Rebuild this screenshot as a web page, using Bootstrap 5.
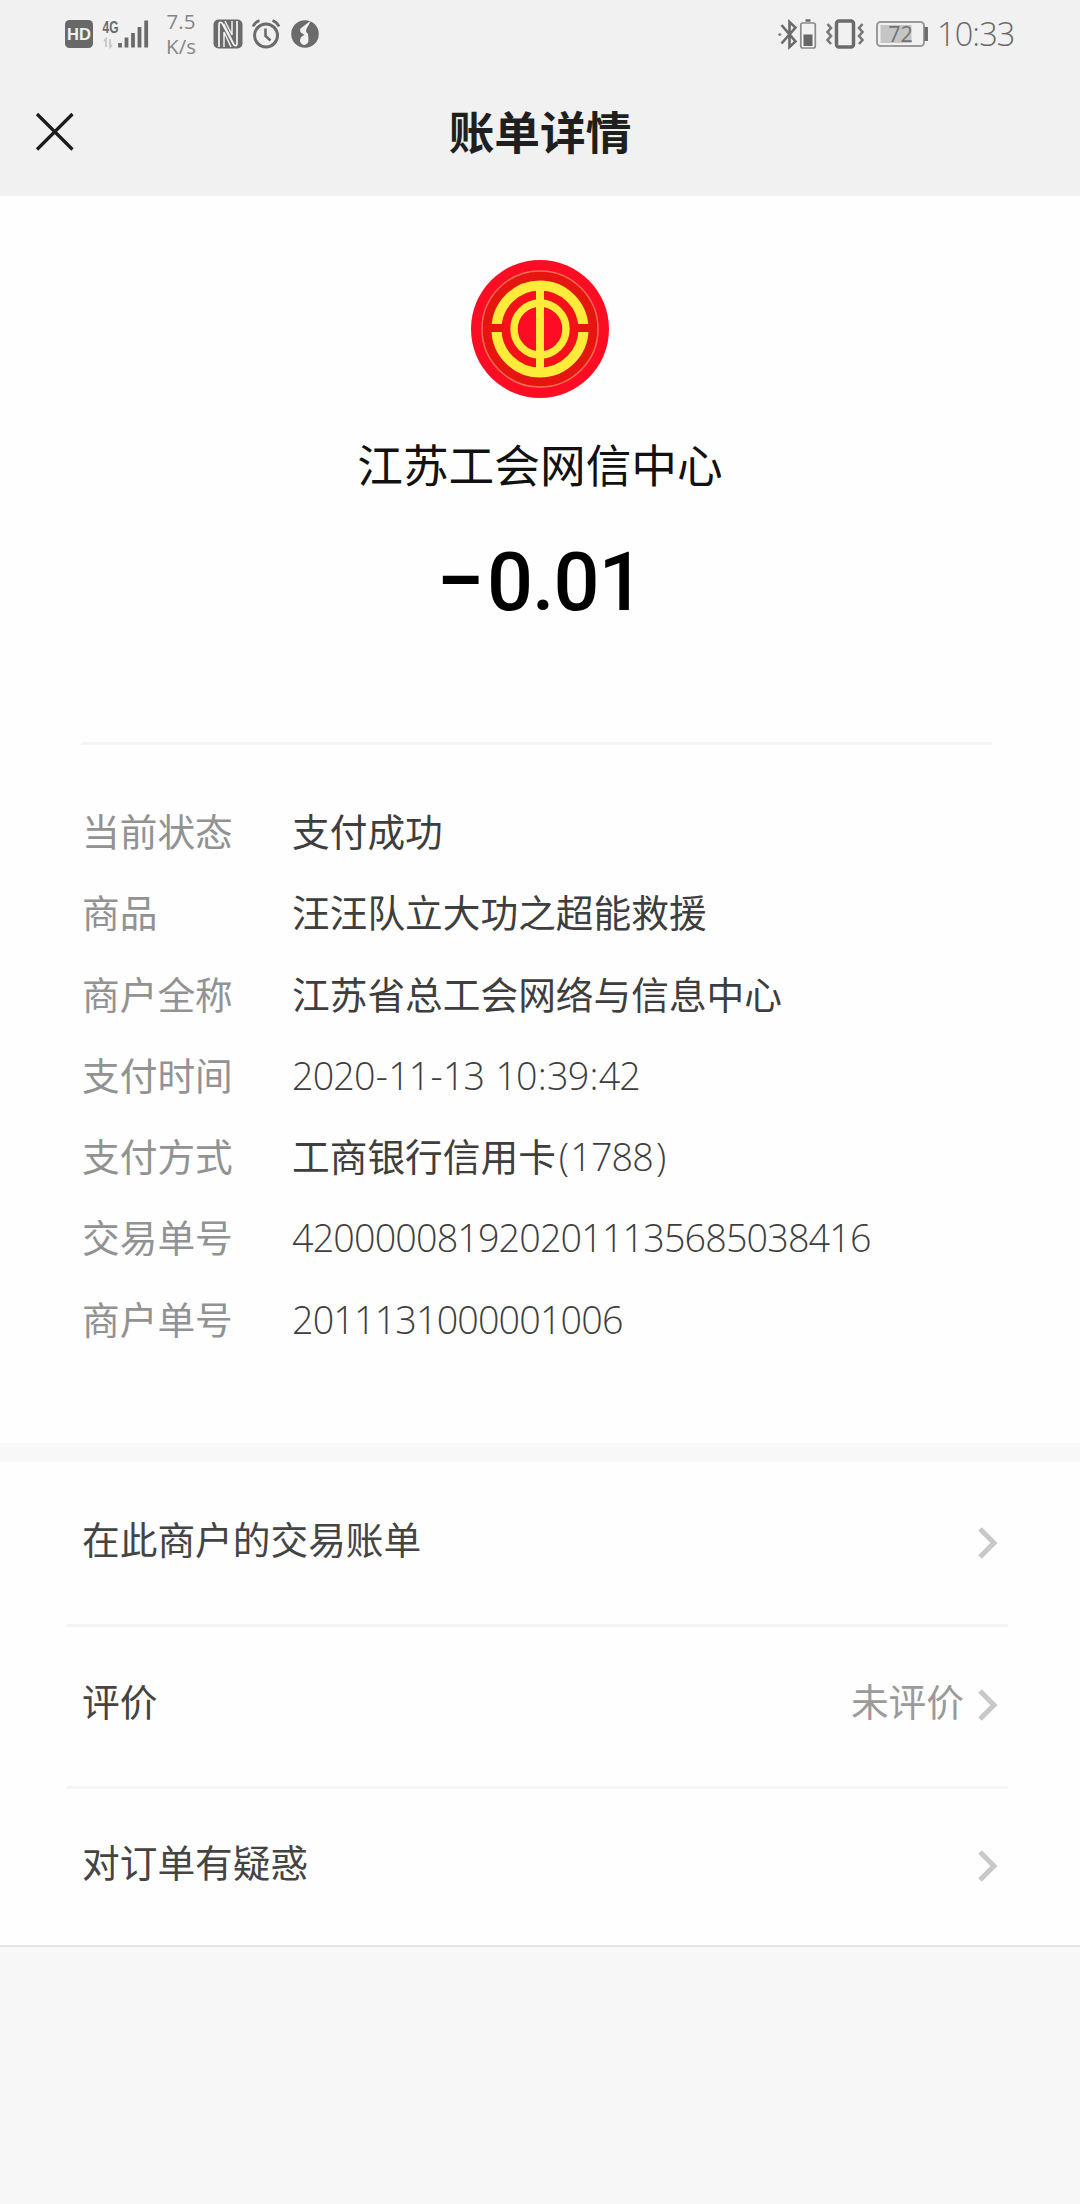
<!DOCTYPE html>
<html lang="zh-CN">
<head>
    <meta charset="UTF-8">
    <meta name="viewport" content="width=device-width, initial-scale=1.0">
    <title>账单详情</title>
    <link href="https://cdn.jsdelivr.net/npm/bootstrap@5.3.0/dist/css/bootstrap.min.css" rel="stylesheet">
    <style>
        body {
            font-family: "Open Sans", "Noto Sans CJK SC", sans-serif;
            background: #f7f7f7;
            color: #3e3e3e;
        }
        svg {
            display: block;
            flex: none;
        }
        .top-area {
            height: 196px;
            background: #f1f1f1;
        }
        .status-bar {
            height: 68px;
            padding: 0 68px 0 65px;
            color: #6b6b6b;
        }
        .net-speed {
            width: 34px;
            margin: 0 15px 0 15px;
            font: 400 20.5px/25px "Open Sans", sans-serif;
            color: #858585;
        }
        .clock {
            width: 75px;
            margin-left: 9px;
            font-size: 32.5px;
            font-weight: 340;
            line-height: 68px;
            letter-spacing: -0.9px;
            color: #6a6a6a;
            white-space: nowrap;
        }
        .nav-line {
            height: 128px;
            grid-template-columns: 110px 1fr 110px;
        }
        .nav-title {
            font-size: 45.7px;
            font-weight: 700;
            line-height: 128px;
            color: #1f1f1f;
        }
        .bill {
            height: 1247px;
            padding: 64px 82px 0;
            background: #fefefe;
        }
        .merchant {
            margin-top: 29px;
            font-size: 45.7px;
            line-height: 76px;
            color: #111;
        }
        .amount {
            margin-top: 35px;
            height: 88px;
            font-family: Roboto, sans-serif;
            font-size: 81px;
            font-weight: 550;
            line-height: 88px;
            letter-spacing: -1px;
            color: #000;
        }
        .minus {
            font-size: 86px;
            line-height: 1;
            letter-spacing: 2px;
        }
        .bill-rule {
            height: 3px;
            margin: 116px 6px 46px -1px;
            background: #f4f4f4;
        }
        .bill-row {
            height: 81.3px;
            font-size: 37.7px;
            line-height: 81px;
        }
        .bill-label {
            width: 210px;
            color: #929292;
        }
        .num {
            font-weight: 350;
            letter-spacing: -0.85px;
        }
        .sep {
            margin: 0 1.1px;
        }
        .paren {
            margin: 0 2px 0 3px;
        }
        .band {
            height: 19px;
            background: #f8f8f8;
        }
        .links {
            height: 485px;
            padding: 3px 72px 0 66px;
            background: #fefefe;
            border-bottom: 2px solid #e4e4e4;
        }
        .link-row {
            height: 162px;
            padding: 0 9px 9px 16px;
            font-size: 37.7px;
            color: #444;
            border-bottom: 3px solid #f4f4f4;
        }
        .link-row:last-child {
            height: 158px;
            border-bottom: 0;
        }
        .link-row svg {
            margin-top: 3px;
        }
        .hint {
            margin-right: 13px;
            color: #9a9a9a;
        }
    </style>
</head>
<body>
    <header class="top-area">
        <!-- 状态栏 -->
        <div class="status-bar d-flex align-items-center justify-content-between">
            <div class="d-flex align-items-center">
                <svg width="28" height="28" viewBox="0 0 28 28">
                    <rect width="28" height="28" rx="4.5" fill="#686868"/>
                    <text x="14" y="19.5" text-anchor="middle" font-family="Liberation Sans" font-weight="700" font-size="16.5" fill="#f1f1f1">HD</text>
                </svg>
                <svg class="ms-2" width="48" height="30" viewBox="0 0 48 30">
                    <text x="1.5" y="13.5" font-family="Liberation Sans" font-weight="700" font-size="17" textLength="16" lengthAdjust="spacingAndGlyphs" fill="#6b6b6b">4G</text>
                    <path d="M5 28v-8l-2 2M9 20v8l2-2" fill="none" stroke="#c6c6c6" stroke-width="1.8"/>
                    <path d="M19 28.500v-4.500M25.500 28.500v-10M32 28.500v-14.500M38.500 28.500v-20.500M45.200 28.500v-27" fill="none" stroke="#6b6b6b" stroke-width="3.800"/>
                </svg>
                <div class="net-speed text-center">7.5<br>K/s</div>
                <!-- NFC -->
                <svg width="30" height="30" viewBox="0 0 30 30">
                    <rect x=".5" y=".5" width="29" height="29" rx="5" fill="#6b6b6b"/>
                    <path d="M6 28V6Q6 2 9 4L20.500 25M10.500 5L21 26Q24 28 24 24V2" fill="none" stroke="#f1f1f1" stroke-width="1.800"/>
                    <path d="M11 28V13L18 28" fill="none" stroke="#f1f1f1" stroke-width="1.500"/>
                    <path d="M12 2L19 16V2" fill="none" stroke="#f1f1f1" stroke-width="1.500"/>
                </svg>
                <svg class="ms-2" width="30" height="30" viewBox="0 0 30 30">
                    <circle cx="15" cy="16.500" r="11.500" fill="none" stroke="#6b6b6b" stroke-width="3"/>
                    <path d="M14.500 9.500v7.500l5 4.500" fill="none" stroke="#6b6b6b" stroke-width="2.600"/>
                    <path d="M2 7.500Q4 3 8.500 1.500M28 7.500Q26 3 21.500 1.500" fill="none" stroke="#6b6b6b" stroke-width="2.800"/>
                </svg>
                <svg class="ms-2" width="30" height="28" viewBox="-2 0 30 28">
                    <circle cx="14" cy="14" r="13.800" fill="#6b6b6b"/>
                    <path d="M20 0.500L9.500 8.500Q8 12 11.500 13.500L13.500 15Q9 16.500 9 21Q10 25 13.500 25Q17.500 24 17.500 19.500L17 14Q14 11.500 15.500 9Z" fill="#f1f1f1"/>
                </svg>
            </div>
            <div class="d-flex align-items-center">
                <!-- 蓝牙与耳机电量 -->
                <svg width="40" height="31" viewBox="0 0 40 31">
                    <path d="M3.500 6L17.500 22.500L11.500 28V3L17.500 8.500L3.500 24.500" fill="none" stroke="#6b6b6b" stroke-width="2.600"/>
                    <circle cx="1.800" cy="15.500" r="1.600" fill="#888"/>
                    <path d="M27.500 1.500h5" stroke="#6b6b6b" stroke-width="2.400"/>
                    <rect x="22.800" y="4" width="14.500" height="25" rx="2" fill="none" stroke="#8a8a8a" stroke-width="1.700"/>
                    <rect x="25.500" y="15.500" width="9" height="11.500" fill="#666"/>
                </svg>
                <!-- 振动 -->
                <svg class="ms-2" width="38" height="30" viewBox="0 0 38 30">
                    <rect x="10.500" y="2" width="17" height="26" rx="2.500" fill="none" stroke="#6b6b6b" stroke-width="3.500"/>
                    <path d="M1.500 5l3.500 4l-3.500 4l3.500 4l-3.500 4l3.500 4M36.500 5l-3.500 4l3.500 4l-3.500 4l3.500 4l-3.500 4" fill="none" stroke="#777" stroke-width="2.600"/>
                </svg>
                <svg class="ms-2" width="56" height="28" viewBox="-2 0 56 28">
                    <rect x="3" y="2" width="47" height="24" rx="3.500" fill="none" stroke="#9b9b9b" stroke-width="2"/>
                    <rect x="6.500" y="5" width="31" height="18" fill="#c5c5c5"/>
                    <path d="M52.200 7v14" stroke="#6b6b6b" stroke-width="3.500"/>
                    <text x="26.500" y="21.500" text-anchor="middle" font-family="Open Sans" font-size="21.500" fill="#737373">72</text>
                </svg>
                <div class="clock">10:33</div>
            </div>
        </div>
        <!-- 标题栏 -->
        <div class="nav-line d-grid align-items-center text-center">
            <svg width="110" height="128" viewBox="0 0 110 128">
                <path d="M37 46L72.500 81.500M72.500 46L37 81.500" fill="none" stroke="#1c1c1c" stroke-width="3.200"/>
            </svg>
            <div class="nav-title">账单详情</div>
        </div>
    </header>

    <main>
        <section class="bill">
            <svg class="mx-auto" width="138" height="138" viewBox="-69 -69 138 138">
                <circle r="69" fill="#fd0d23"/>
                <circle r="58" fill="#e5150f" stroke="#ff6a55" stroke-width="1.500"/>
                <circle r="38" fill="#f5101a"/>
                <circle r="22" fill="#ff0b24"/>
                <circle r="43.500" fill="none" stroke="#ffec3a" stroke-width="10"/>
                <path d="M-52 -1H-36M36 -1H52" stroke="#e5150f" stroke-width="8"/>
                <circle r="26" fill="none" stroke="#ffec3a" stroke-width="7.500"/>
                <path d="M0 -44V44" stroke="#ffec3a" stroke-width="8"/>
            </svg>
            <div class="merchant text-center">江苏工会网信中心</div>
            <div class="amount text-center"><span class="minus">−</span>0.01</div>
            <div class="bill-rule"></div>
            <div id="billRows"></div>
        </section>

        <div class="band"></div>

        <section class="links">
            <div class="link-row d-flex align-items-center">
                <span class="me-auto">在此商户的交易账单</span>
                <svg width="22" height="34" viewBox="0 0 22 34"><path d="M3 4L17 18L3 32" fill="none" stroke="#c8c8c8" stroke-width="5"/></svg>
            </div>
            <div class="link-row d-flex align-items-center">
                <span class="me-auto">评价</span>
                <span class="hint">未评价</span>
                <svg width="22" height="34" viewBox="0 0 22 34"><path d="M3 4L17 18L3 32" fill="none" stroke="#c8c8c8" stroke-width="5"/></svg>
            </div>
            <div class="link-row d-flex align-items-center">
                <span class="me-auto">对订单有疑惑</span>
                <svg width="22" height="34" viewBox="0 0 22 34"><path d="M3 4L17 18L3 32" fill="none" stroke="#c8c8c8" stroke-width="5"/></svg>
            </div>
        </section>
    </main>

    <script src="https://cdn.jsdelivr.net/npm/bootstrap@5.3.0/dist/js/bootstrap.bundle.min.js"></script>
    <script>
        // 账单明细
        const rows = [
            ['当前状态', '支付成功'],
            ['商品', '汪汪队立大功之超能救援'],
            ['商户全称', '江苏省总工会网络与信息中心'],
            ['支付时间', '<span class="num">' + '2020-11-13 10:39:42'.replace(/[-: ]/g, '<span class="sep">$&</span>') + '</span>'],
            ['支付方式', '工商银行信用卡<span class="num"><span class="paren">(</span>1788<span class="paren">)</span></span>'],
            ['交易单号', '<span class="num">4200000819202011135685038416</span>'],
            ['商户单号', '<span class="num">2011131000001006</span>']
        ];

        document.getElementById('billRows').innerHTML = rows.map(([label, value]) => `
            <div class="bill-row d-flex">
                <div class="bill-label">${label}</div>
                <div class="text-nowrap">${value}</div>
            </div>
        `).join('');
    </script>
</body>
</html>
